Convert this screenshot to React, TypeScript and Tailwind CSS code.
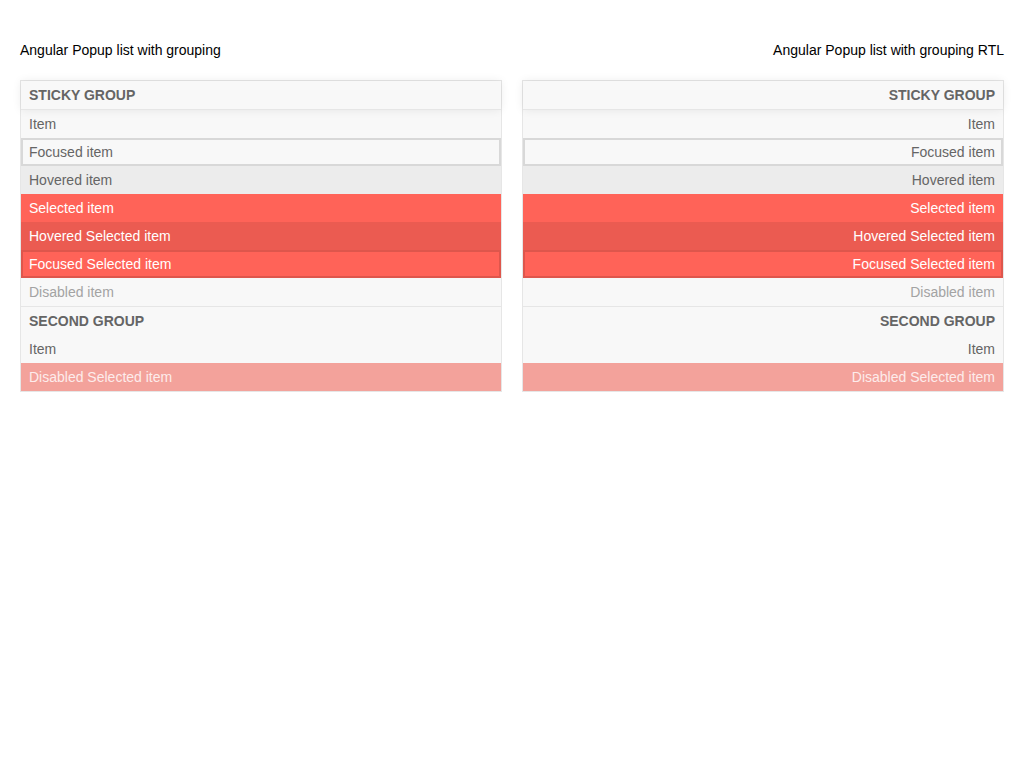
import React from 'react';

type Kind = 'normal' | 'focused' | 'hovered' | 'selected' | 'hoveredSelected' | 'focusedSelected' | 'disabled' | 'disabledSelected';

const rowClass: Record<Kind, string> = {
  normal: '',
  focused: 'shadow-[inset_0_0_0_2px_rgba(0,0,0,0.13)]',
  hovered: 'bg-[#ececec]',
  selected: 'bg-[#ff6358] text-white',
  hoveredSelected: 'bg-[#eb5b51] text-white',
  focusedSelected: 'bg-[#ff6358] text-white shadow-[inset_0_0_0_2px_rgba(0,0,0,0.13)]',
  disabled: 'text-[#a3a3a3]',
  disabledSelected: 'bg-[#f3a29b] text-[#fdeceb]',
};

const first: [string, Kind][] = [
  ['Item', 'normal'],
  ['Focused item', 'focused'],
  ['Hovered item', 'hovered'],
  ['Selected item', 'selected'],
  ['Hovered Selected item', 'hoveredSelected'],
  ['Focused Selected item', 'focusedSelected'],
  ['Disabled item', 'disabled'],
];

const second: [string, Kind][] = [
  ['Item', 'normal'],
  ['Disabled Selected item', 'disabledSelected'],
];

function Row({ label, kind }: { label: string; kind: Kind }) {
  return <li className={`h-7 px-2 py-1 leading-5 ${rowClass[kind]}`}>{label}</li>;
}

function PopupList({ rtl }: { rtl?: boolean }) {
  return (
    <div dir={rtl ? 'rtl' : 'ltr'} className="border border-[#e6e6e6] bg-[#f8f8f8] text-sm text-[#656565]">
      <div className="relative z-10 h-[29px] border-b border-[#e6e6e6] bg-[#f8f8f8] px-2 py-1 font-bold uppercase leading-5 shadow-[0_0_10px_rgba(0,0,0,0.08)]">
        Sticky group
      </div>
      <ul>
        {first.map(([l, k]) => (
          <Row key={l} label={l} kind={k} />
        ))}
        <li className="h-[29px] border-t border-[#e6e6e6] px-2 py-1 font-bold uppercase leading-5">Second group</li>
        {second.map(([l, k]) => (
          <Row key={l} label={l} kind={k} />
        ))}
      </ul>
    </div>
  );
}

export default function App() {
  return (
    <div className="min-h-screen bg-white px-5 pt-10 font-['Liberation_Sans',Arial,sans-serif]">
      <div className="grid grid-cols-2 gap-5">
        <section>
          <h2 className="mb-5 h-5 text-sm leading-5 text-black">Angular Popup list with grouping</h2>
          <PopupList />
        </section>
        <section>
          <h2 className="mb-5 h-5 text-right text-sm leading-5 text-black">Angular Popup list with grouping RTL</h2>
          <PopupList rtl />
        </section>
      </div>
    </div>
  );
}
